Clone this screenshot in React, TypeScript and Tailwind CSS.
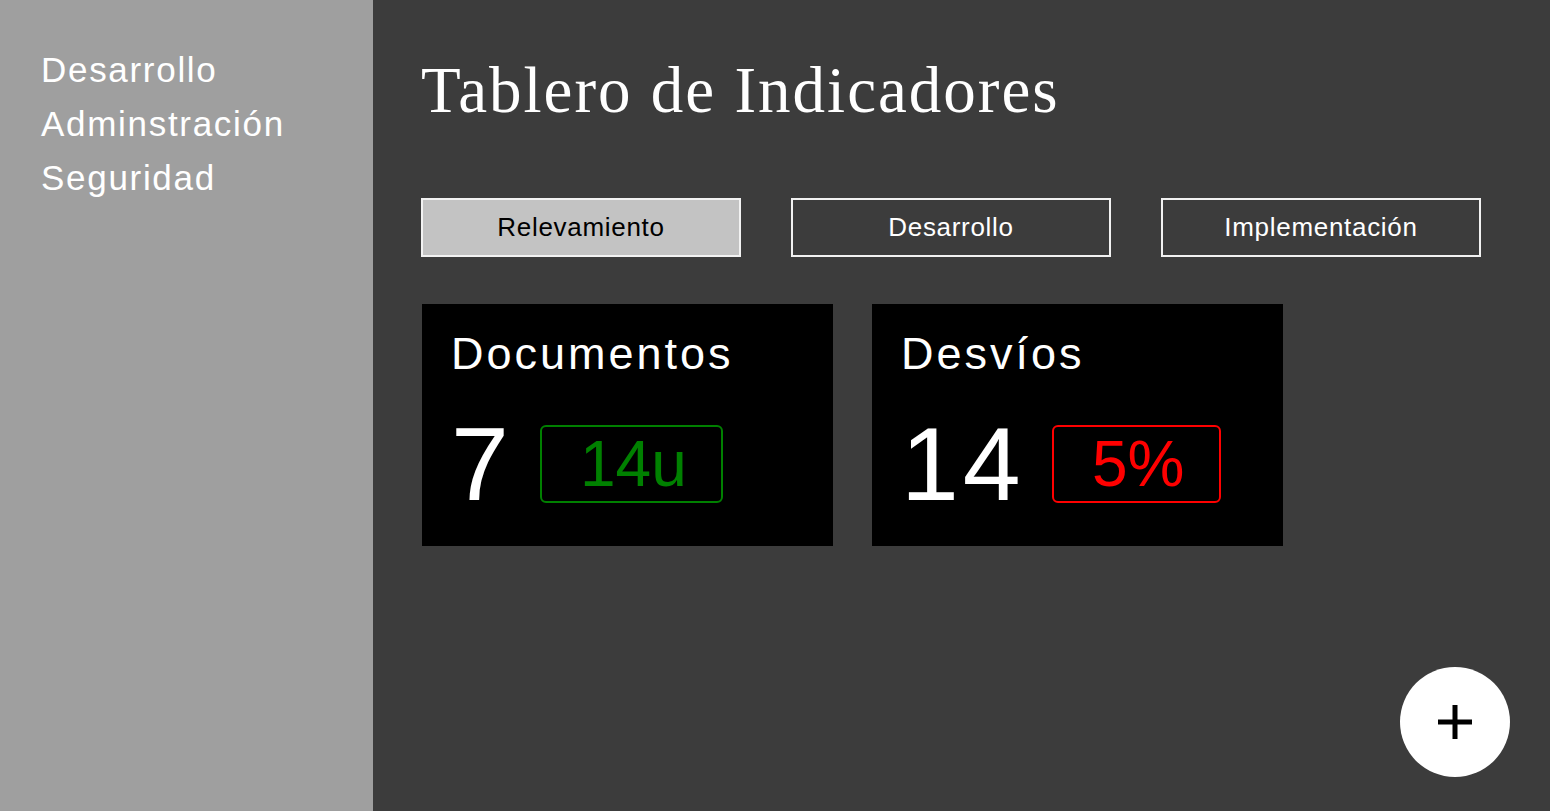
const menu = ["Desarrollo", "Adminstración", "Seguridad"];
const tabs = ["Relevamiento", "Desarrollo", "Implementación"];

const cards = [
  { title: "Documentos", value: "7", badge: "14u", tone: "border-[#008000] text-[#008000]", badgeW: "w-[183px]" },
  { title: "Desvíos", value: "14", badge: "5%", tone: "border-[#ff0000] text-[#ff0000]", badgeW: "w-[169px]" },
];

export default function App() {
  return (
    <div className="relative flex h-screen min-h-[811px] w-full overflow-hidden font-['Liberation_Sans',Arial,sans-serif]">
      <aside className="w-[373px] shrink-0 bg-[#9f9f9f] pl-[41px] pt-[43px]">
        <ul>
          {menu.map((item) => (
            <li key={item} className="text-[35px] leading-[54px] tracking-[1.7px] text-white">
              {item}
            </li>
          ))}
        </ul>
      </aside>

      <main className="flex-1 bg-[#3c3c3c] pl-[48px] pt-[58px]">
        <h1 className="font-['Liberation_Serif','Times_New_Roman',serif] text-[65px] leading-none tracking-[2px] text-white">
          Tablero de Indicadores
        </h1>

        <div className="mt-[75px] flex gap-[50px]">
          {tabs.map((tab, i) => (
            <button
              key={tab}
              className={`flex h-[59px] w-[320px] items-center justify-center border-2 border-[#f2f2f2] text-[26px] tracking-[0.7px] ${
                i === 0 ? "bg-[#c3c3c3] text-black" : "bg-transparent text-white"
              }`}
            >
              {tab}
            </button>
          ))}
        </div>

        <div className="mt-[47px] flex gap-[39px] pl-px">
          {cards.map((c) => (
            <div key={c.title} className="h-[242px] w-[411px] bg-black pl-[29px] pt-[27px]">
              <div className="text-[45px] leading-none tracking-[3px] text-white">{c.title}</div>
              <div className="mt-[36px] flex items-center gap-[27px]">
                <span className="text-[104px] leading-none tracking-[4px] text-white">{c.value}</span>
                <span
                  className={`flex h-[78px] items-center justify-center rounded-[6px] border-2 pl-[4px] text-[64px] leading-none ${c.tone} ${c.badgeW}`}
                >
                  {c.badge}
                </span>
              </div>
            </div>
          ))}
        </div>
      </main>

      <button className="absolute bottom-[34px] right-[40px] flex h-[110px] w-[110px] items-center justify-center rounded-full bg-white">
        <svg width="34" height="34" viewBox="0 0 34 34" fill="#000">
          <rect x="0" y="14.5" width="34" height="5" />
          <rect x="14.5" y="0" width="5" height="34" />
        </svg>
      </button>
    </div>
  );
}
